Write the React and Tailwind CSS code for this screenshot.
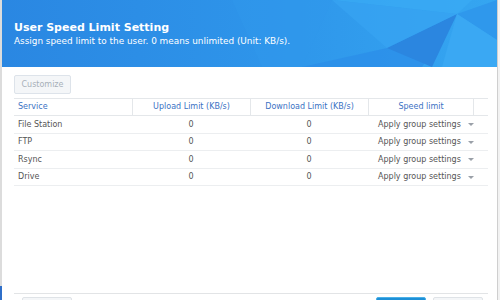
import React from 'react';

const ROWS = ['File Station', 'FTP', 'Rsync', 'Drive'];
const font = { fontFamily: '"DejaVu Sans", Verdana, sans-serif' };

function HeaderArt() {
  return (
    <svg className="absolute inset-0 w-full h-full" viewBox="0 0 495 67" preserveAspectRatio="none">
      <defs>
        <linearGradient id="hg" x1="0" y1="0" x2="1" y2="0">
          <stop offset="0" stopColor="#2a87e2" />
          <stop offset="0.55" stopColor="#2e95ea" />
          <stop offset="1" stopColor="#35a6f1" />
        </linearGradient>
      </defs>
      <rect width="495" height="67" fill="url(#hg)" />
      <polygon points="230,0 330,0 300,67 260,67" fill="#2f98ec" opacity="0.5" />
      <polygon points="330,0 470,0 455,14" fill="#3aaaf4" opacity="0.8" />
      <polygon points="300,67 385,48 455,14 420,67" fill="#2c8fe8" opacity="0.8" />
      <polygon points="385,48 455,14 430,67" fill="#2b86e0" />
      <polygon points="455,14 495,0 495,40" fill="#2f98ec" />
      <polygon points="455,14 495,40 495,67 440,67" fill="#3aa8f3" />
      <polygon points="330,0 455,14 385,48" fill="#38a4f2" opacity="0.7" />
    </svg>
  );
}

export default function App() {
  return (
    <div className="w-[500px] h-[300px] bg-white flex overflow-hidden text-[8px] text-[#555]" style={font}>
      <div className="w-[2px] h-full bg-[#dcdcdc] flex flex-col justify-end">
        <div className="h-[14px] bg-[#2f6fc9]" />
      </div>
      <div className="flex-1 flex flex-col">
        <div className="relative h-[67px] shrink-0">
          <HeaderArt />
          <div className="relative pl-[12px] pt-[21px] text-white">
            <div className="text-[11px] font-bold leading-[14px]">User Speed Limit Setting</div>
            <div className="text-[8.9px] leading-[12px]">Assign speed limit to the user. 0 means unlimited (Unit: KB/s).</div>
          </div>
        </div>
        <div className="pl-[12px] pr-[9px] pt-[8px] flex flex-col flex-1">
          <div>
            <button className="h-[19px] w-[57px] rounded-[2px] border border-[#dde3ea] bg-[#f4f6f8] text-[#a8b0b8] text-[8px]">Customize</button>
          </div>
          <div className="mt-[4px] flex flex-col">
            <div className="flex h-[18px] border-y border-[#e4e7ea] text-[#3b72c4] items-center">
              <div className="w-[118px] pl-[4px]">Service</div>
              <div className="w-[118px] text-center border-l border-[#e4e7ea] h-full flex items-center justify-center">Upload Limit (KB/s)</div>
              <div className="w-[118px] text-center border-l border-[#e4e7ea] h-full flex items-center justify-center">Download Limit (KB/s)</div>
              <div className="w-[105px] text-center border-l border-[#e4e7ea] h-full flex items-center justify-center">Speed limit</div>
              <div className="w-[13px] border-l border-[#e4e7ea] h-full" />
            </div>
            {ROWS.map((r) => (
              <div key={r} className="flex h-[17.5px] border-b border-[#eceef0] items-center pt-[1px]">
                <div className="w-[118px] pl-[4px]">{r}</div>
                <div className="w-[118px] text-center">0</div>
                <div className="w-[118px] text-center">0</div>
                <div className="w-[118px] flex items-center pl-[10px]">
                  <span>Apply group settings</span>
                  <svg className="ml-[7px]" width="6" height="3" viewBox="0 0 6 3"><polygon points="0,0 6,0 3,3" fill="#9aa0a8" /></svg>
                </div>
              </div>
            ))}
          </div>
          <div className="flex-1" />
          <div className="border-t border-[#e2e4e6] h-[7px] flex items-start pt-[3px]">
            <div className="ml-[8px] w-[50px] h-[10px] rounded-t-[2px] border border-[#dfe3e7] bg-[#f4f6f8]" />
            <div className="flex-1" />
            <div className="w-[50px] h-[10px] rounded-t-[2px] bg-[#1d8fd6] border border-[#4ab0e8]" />
            <div className="ml-[7px] mr-[5px] w-[50px] h-[10px] rounded-t-[2px] border border-[#dfe3e7] bg-[#f4f6f8]" />
          </div>
        </div>
      </div>
      <div className="w-[3px] h-full bg-[#f2f2f2] border-l border-[#cfcfcf]" />
    </div>
  );
}
